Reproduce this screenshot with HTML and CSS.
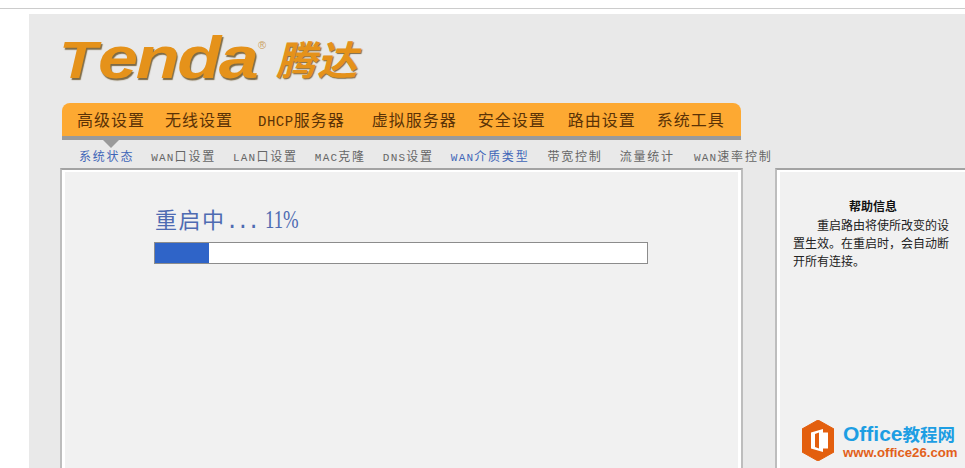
FILE: index.html
```html
<!DOCTYPE html>
<html lang="zh-CN">
<head>
    <meta charset="UTF-8">
    <meta name="viewport" content="width=device-width, initial-scale=1.0">
    <title>Tenda 腾达</title>
    <link rel="stylesheet" href="styles.css">
</head>
<body>

    <div class="top-line"></div>

    <div class="page">
        <!-- logo -->
        <div class="logo">
            <div class="logo-en"><span class="logo-t">T</span><span class="logo-rest">enda</span></div>
            <span class="logo-reg">®</span>
            <span class="logo-cn">腾达</span>
        </div>

        <!-- main menu -->
        <ul class="nav">
            <li>高级设置</li>
            <li>无线设置</li>
            <li><span class="en">DHCP</span>服务器</li>
            <li>虚拟服务器</li>
            <li>安全设置</li>
            <li>路由设置</li>
            <li>系统工具</li>
        </ul>

        <ul class="subnav">
            <li class="active">系统状态</li>
            <li><span class="en">WAN</span>口设置</li>
            <li><span class="en">LAN</span>口设置</li>
            <li><span class="en">MAC</span>克隆</li>
            <li><span class="en">DNS</span>设置</li>
            <li class="current"><span class="en">WAN</span>介质类型</li>
            <li>带宽控制</li>
            <li>流量统计</li>
            <li><span class="en">WAN</span>速率控制</li>
        </ul>

        <div class="panels">
            <div class="panel main-panel">
                <p class="reboot-title">重启中<span class="dots">...</span><span class="percent">11%</span></p>
                <div class="progress">
                    <div class="progress-fill" style="width: 11%"></div>
                </div>
            </div>
            <div class="panel help-panel">
                <h2>帮助信息</h2>
                <p>重启路由将使所改变的设置生效。在重启时，会自动断开所有连接。</p>
            </div>
        </div>
    </div>

    <!-- site watermark -->
    <div class="watermark">
        <svg class="watermark-icon" viewBox="0 0 32 41" width="32" height="41">
            <polygon points="16,0 32,9 32,32 16,41 0,32 0,9" fill="#e35f0e" stroke="#e35f0e" stroke-width="1" stroke-linejoin="round"/>
            <path d="M9 12.500 L21 9 V32 L9 28.500 Z M13 14 V27 L17 28.500 V12.500 Z M21 12.500 H26 V28.500 H21 Z" fill="#fff" fill-rule="evenodd"/>
        </svg>
        <div class="watermark-text">
            <div class="watermark-name">Office<span class="watermark-cn">教程网</span></div>
            <div class="watermark-url">www.office26.com</div>
        </div>
    </div>

</body>
</html>
```

FILE: styles.css
```css
html, body {
    height: 468px;
    overflow: hidden;
}

body {
    margin: 0;
    background-color: #fff;
    font-family: "Liberation Serif", "Noto Sans CJK SC", serif;
    color: #333;
}

ul {
    list-style: none;
    margin: 0;
    padding: 0;
}

.top-line {
    height: 1px;
    margin-top: 8px;
    background-color: #ccc;
}

.page {
    margin-top: 5px;
    margin-left: 29px;
    height: 454px;
    padding-left: 33px;
    background-color: #e9e9e9;
    box-sizing: border-box;
    overflow: hidden;
}

/* logo */
.logo {
    display: flex;
    align-items: flex-start;
    height: 89px;
}

.logo-en {
    display: flex;
    align-items: baseline;
    width: 199px;
    margin-top: 9px;
    margin-left: -3px;
    font-family: "Liberation Sans", sans-serif;
    line-height: 70px;
    font-weight: bold;
    font-style: italic;
    color: #e5921a;
    text-shadow: 1px 2px 1px #7d6a45;
}

.logo-t {
    display: inline-block;
    width: 39px;
    font-size: 52px;
    transform: scaleX(1.2);
    transform-origin: left;
}

.logo-rest {
    display: inline-block;
    font-size: 60px;
    letter-spacing: -2px;
    transform: scaleX(1.2);
    transform-origin: left;
}

.logo-reg {
    width: 16px;
    margin-top: 24px;
    font-family: "Liberation Sans", sans-serif;
    font-size: 11px;
    line-height: 14px;
    color: #c9a060;
}

.logo-cn {
    margin-top: 19px;
    margin-left: 2px;
    font-family: "Noto Sans CJK SC", sans-serif;
    font-size: 40px;
    line-height: 50px;
    font-weight: bold;
    font-style: italic;
    letter-spacing: 1px;
    color: #e5921a;
    text-shadow: 1px 1px 1px #7d6a45;
}

/* main menu */
.nav {
    display: flex;
    gap: 20px;
    width: 664px;
    height: 33px;
    padding-left: 15px;
    border-bottom: 4px solid #9a9a9a;
    border-radius: 8px 8px 0 0;
    background-color: #fda932;
    font-family: "Noto Sans CJK SC", sans-serif;
    font-size: 16px;
    line-height: 33px;
    letter-spacing: 1px;
    color: #5a3206;
}

.nav .en {
    font-family: "Liberation Mono", monospace;
    font-size: 14px;
    letter-spacing: 0.5px;
}

.nav li:nth-child(2) {
    margin-right: 5px;
}

.nav li:nth-child(3) {
    margin-right: 7px;
}

.nav li:nth-child(4) {
    margin-right: 1px;
}

.nav li:nth-child(5) {
    margin-right: 2px;
}

.nav li:nth-child(6) {
    margin-right: 1px;
}

/* sub menu */
.subnav {
    display: flex;
    gap: 17px;
    height: 28px;
    padding-left: 17px;
    font-family: "Noto Sans CJK SC", sans-serif;
    font-size: 12px;
    line-height: 32px;
    letter-spacing: 1.8px;
    color: #666;
}

.subnav .en {
    font-family: "Liberation Mono", monospace;
    font-size: 11px;
    letter-spacing: 1.2px;
}

.subnav li {
    position: relative;
    white-space: nowrap;
}

.subnav .active {
    color: #3f66b8;
}

.subnav .active::before {
    content: "";
    position: absolute;
    left: 24px;
    top: 0;
    border-left: 8px solid transparent;
    border-right: 8px solid transparent;
    border-top: 8px solid #9a9a9a;
}

.subnav .current {
    color: #3f66b8;
    margin-right: 1px;
}

.subnav li:nth-child(8) {
    margin-right: 2px;
}

/* content panels */
.panels {
    display: flex;
    gap: 32px;
    margin-left: -2px;
    height: 320px;
}

.panel {
    flex: none;
    box-sizing: border-box;
    height: 320px;
    border: 2px solid #bdbdbd;
    border-top-color: #a3a3a3;
    background-color: #f1f1f1;
    box-shadow: inset 3px 2px 0 #fff, inset -3px 0 0 #fff;
}

.main-panel {
    width: 683px;
    padding: 36px 0 0 92px;
}

.reboot-title {
    margin: 0 0 7px 1px;
    font-family: "Noto Sans CJK SC", sans-serif;
    font-size: 22px;
    line-height: 24px;
    letter-spacing: 1.5px;
    color: #4e6bb2;
}

.reboot-title .dots {
    margin-right: 7px;
    font-family: "Liberation Mono", monospace;
    letter-spacing: -2.5px;
}

.reboot-title .percent {
    display: inline-block;
    font-family: "Liberation Serif", serif;
    font-size: 25px;
    letter-spacing: 0;
    transform: scaleX(0.75);
    transform-origin: left;
}

.progress {
    box-sizing: border-box;
    width: 494px;
    height: 22px;
    border: 1px solid #8c8c8c;
    background-color: #fff;
}

.progress-fill {
    height: 100%;
    background-color: #2f64c8;
}

.help-panel {
    width: 240px;
    padding: 27px 0 0 16px;
    border-right: none;
    font-family: "Noto Sans CJK SC", sans-serif;
    font-size: 12px;
    line-height: 18px;
    color: #222;
}

.help-panel h2 {
    width: 160px;
    margin: 0 0 1px;
    font-size: 12px;
    line-height: 18px;
    text-align: center;
    color: #111;
}

.help-panel p {
    width: 156px;
    margin: 0;
    text-indent: 24px;
}

/* watermark sits over the help panel */
.watermark {
    position: absolute;
    left: 802px;
    top: 420px;
    display: flex;
    gap: 9px;
}

.watermark-icon {
    display: block;
}

.watermark-name {
    margin-top: 2px;
    font-family: "Liberation Sans", sans-serif;
    font-size: 21px;
    line-height: 24px;
    font-weight: bold;
    color: #1d9ee3;
    white-space: nowrap;
}

.watermark-cn {
    font-family: "Noto Sans CJK SC", sans-serif;
    font-size: 17.500px;
}

.watermark-url {
    font-family: "Liberation Sans", sans-serif;
    font-size: 13.200px;
    line-height: 14px;
    font-weight: bold;
    color: #e2601a;
    white-space: nowrap;
}
```
